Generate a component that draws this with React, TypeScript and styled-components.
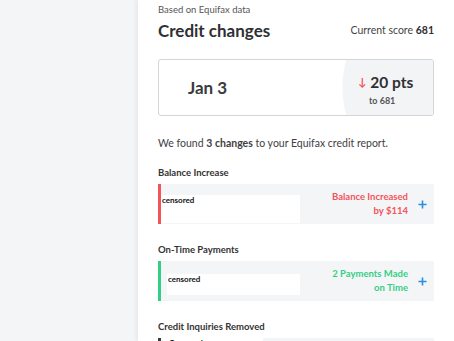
import styled, { createGlobalStyle } from "styled-components";

const GlobalStyle = createGlobalStyle`
  html, body {
    margin: 0;
    padding: 0;
    background: #f4f5f7;
    font-family: "Lato", "Noto Sans", sans-serif;
    color: #333538;
  }
  * { box-sizing: border-box; }
`;

type Tone = "red" | "green" | "dark";

type Change = {
  title: string;
  tone: Tone;
  label?: string[];
  box: { left: number; top: number; width: number; height: number; indent: number };
};

const changes: Change[] = [
  {
    title: "Balance Increase",
    tone: "red",
    label: ["Balance Increased", "by $114"],
    box: { left: 0, top: 11, width: 139, height: 28, indent: 1 },
  },
  {
    title: "On-Time Payments",
    tone: "green",
    label: ["2 Payments Made", "on Time"],
    box: { left: 6, top: 13, width: 133, height: 21, indent: 1 },
  },
  {
    title: "Credit Inquiries Removed",
    tone: "dark",
    box: { left: 0, top: 0, width: 102, height: 40, indent: 8 },
  },
];

const toneColor = {
  red: "#f2545b",
  green: "#34cf86",
  dark: "#3a3a3a",
};

const CreditChanges = () => {
  return (
    <Page>
      <GlobalStyle />
      <Side />
      <Panel>
        <Source>Based on Equifax data</Source>
        <Header>
          <Title>Credit changes</Title>
          <Score>
            Current score <b>681</b>
          </Score>
        </Header>
        <DateCard>
          <DateLabel>Jan 3</DateLabel>
          <Delta>
            <Points>
              <Arrow>↓</Arrow>20 pts
            </Points>
            <ToScore>to 681</ToScore>
          </Delta>
        </DateCard>
        <Summary>
          We found <b>3 changes</b> to your Equifax credit report.
        </Summary>
        {changes.map((c) => (
          <Section key={c.title}>
            <SectionTitle>{c.title}</SectionTitle>
            <Row $tone={c.tone}>
              <Censor
                $left={c.box.left}
                $top={c.box.top}
                $width={c.box.width}
                $height={c.box.height}
                $indent={c.box.indent}
              >
                {c.tone === "dark" ? "Censored" : "censored"}
              </Censor>
              {c.label && (
                <Outcome $tone={c.tone}>
                  {c.label[0]}
                  <br />
                  {c.label[1]}
                </Outcome>
              )}
              {c.label && (
                <Expand viewBox="0 0 10 10">
                  <path d="M5 0.5v9M0.5 5h9" />
                </Expand>
              )}
            </Row>
          </Section>
        ))}
      </Panel>
    </Page>
  );
};

export default CreditChanges;

const Page = styled.div`
  display: flex;
  height: 341px;
  overflow: hidden;
`;

const Side = styled.div`
  width: 138px;
  flex-shrink: 0;
  background: #f4f5f7;
`;

const Panel = styled.main`
  flex: 1;
  background: #fff;
  box-shadow: -2px 0 4px rgba(0, 0, 0, 0.06);
  padding: 4px 20px 0 20px;
`;

const Source = styled.div`
  font-size: 9.5px;
  line-height: 12px;
  color: #555;
`;

const Header = styled.div`
  display: flex;
  justify-content: space-between;
  align-items: center;
  margin-top: 3px;
  height: 22px;
`;

const Title = styled.h1`
  margin: 0;
  font-size: 17px;
  font-weight: 700;
  color: #2f3033;
`;

const Score = styled.div`
  font-size: 10.5px;
  color: #444;
  b {
    color: #2f3033;
  }
`;

const DateCard = styled.div`
  margin-top: 18px;
  height: 57px;
  border: 1px solid #d3d5d8;
  border-radius: 3px;
  display: flex;
  align-items: center;
  justify-content: space-between;
  overflow: hidden;
`;

const DateLabel = styled.div`
  padding-left: 29px;
  font-size: 17px;
  font-weight: 700;
  color: #3a3b3e;
`;

const Delta = styled.div`
  align-self: stretch;
  width: 91px;
  padding: 12px 0 0 16px;
  background: radial-gradient(
    circle 107px at 107px 50%,
    #f3f4f6 99%,
    transparent 100%
  );
`;

const Points = styled.div`
  font-size: 15.5px;
  font-weight: 700;
  line-height: 20px;
  color: #2f3033;
  white-space: nowrap;
`;

const Arrow = styled.span`
  color: #f2545b;
  font-size: 11px;
  font-weight: 700;
  margin-right: 4px;
  vertical-align: 2px;
`;

const ToScore = styled.div`
  font-size: 9px;
  font-weight: 700;
  color: #555;
  padding-left: 11px;
  margin-top: 3px;
`;

const Summary = styled.p`
  margin: 20px 0 0;
  font-size: 10.5px;
  line-height: 14px;
  color: #3f4043;
`;

const Section = styled.section`
  margin-top: 17px;
  & + & {
    margin-top: 20px;
  }
`;

const SectionTitle = styled.h2`
  margin: 0 0 5px;
  font-size: 9.5px;
  line-height: 12px;
  font-weight: 700;
  color: #333;
`;

const Row = styled.div<{ $tone: Tone }>`
  position: relative;
  height: 40px;
  background: #f4f5f7;
  border-left: 3px solid ${(p) => toneColor[p.$tone]};
  display: flex;
  align-items: center;
  justify-content: flex-end;
  padding-right: 7px;
  gap: 10px;
`;

const Censor = styled.div<{
  $left: number;
  $top: number;
  $width: number;
  $height: number;
  $indent: number;
}>`
  position: absolute;
  left: ${(p) => p.$left}px;
  top: ${(p) => p.$top}px;
  width: ${(p) => p.$width}px;
  height: ${(p) => p.$height}px;
  background: #fff;
  font-size: 8px;
  font-weight: 700;
  color: #111;
  padding-left: ${(p) => p.$indent}px;
  line-height: 10px;
`;

const Outcome = styled.div<{ $tone: Tone }>`
  text-align: right;
  font-size: 9.5px;
  line-height: 14px;
  font-weight: 700;
  color: ${(p) => toneColor[p.$tone]};
`;

const Expand = styled.svg`
  width: 9px;
  height: 9px;
  stroke: #2a8fe0;
  stroke-width: 1.8;
  fill: none;
`;
